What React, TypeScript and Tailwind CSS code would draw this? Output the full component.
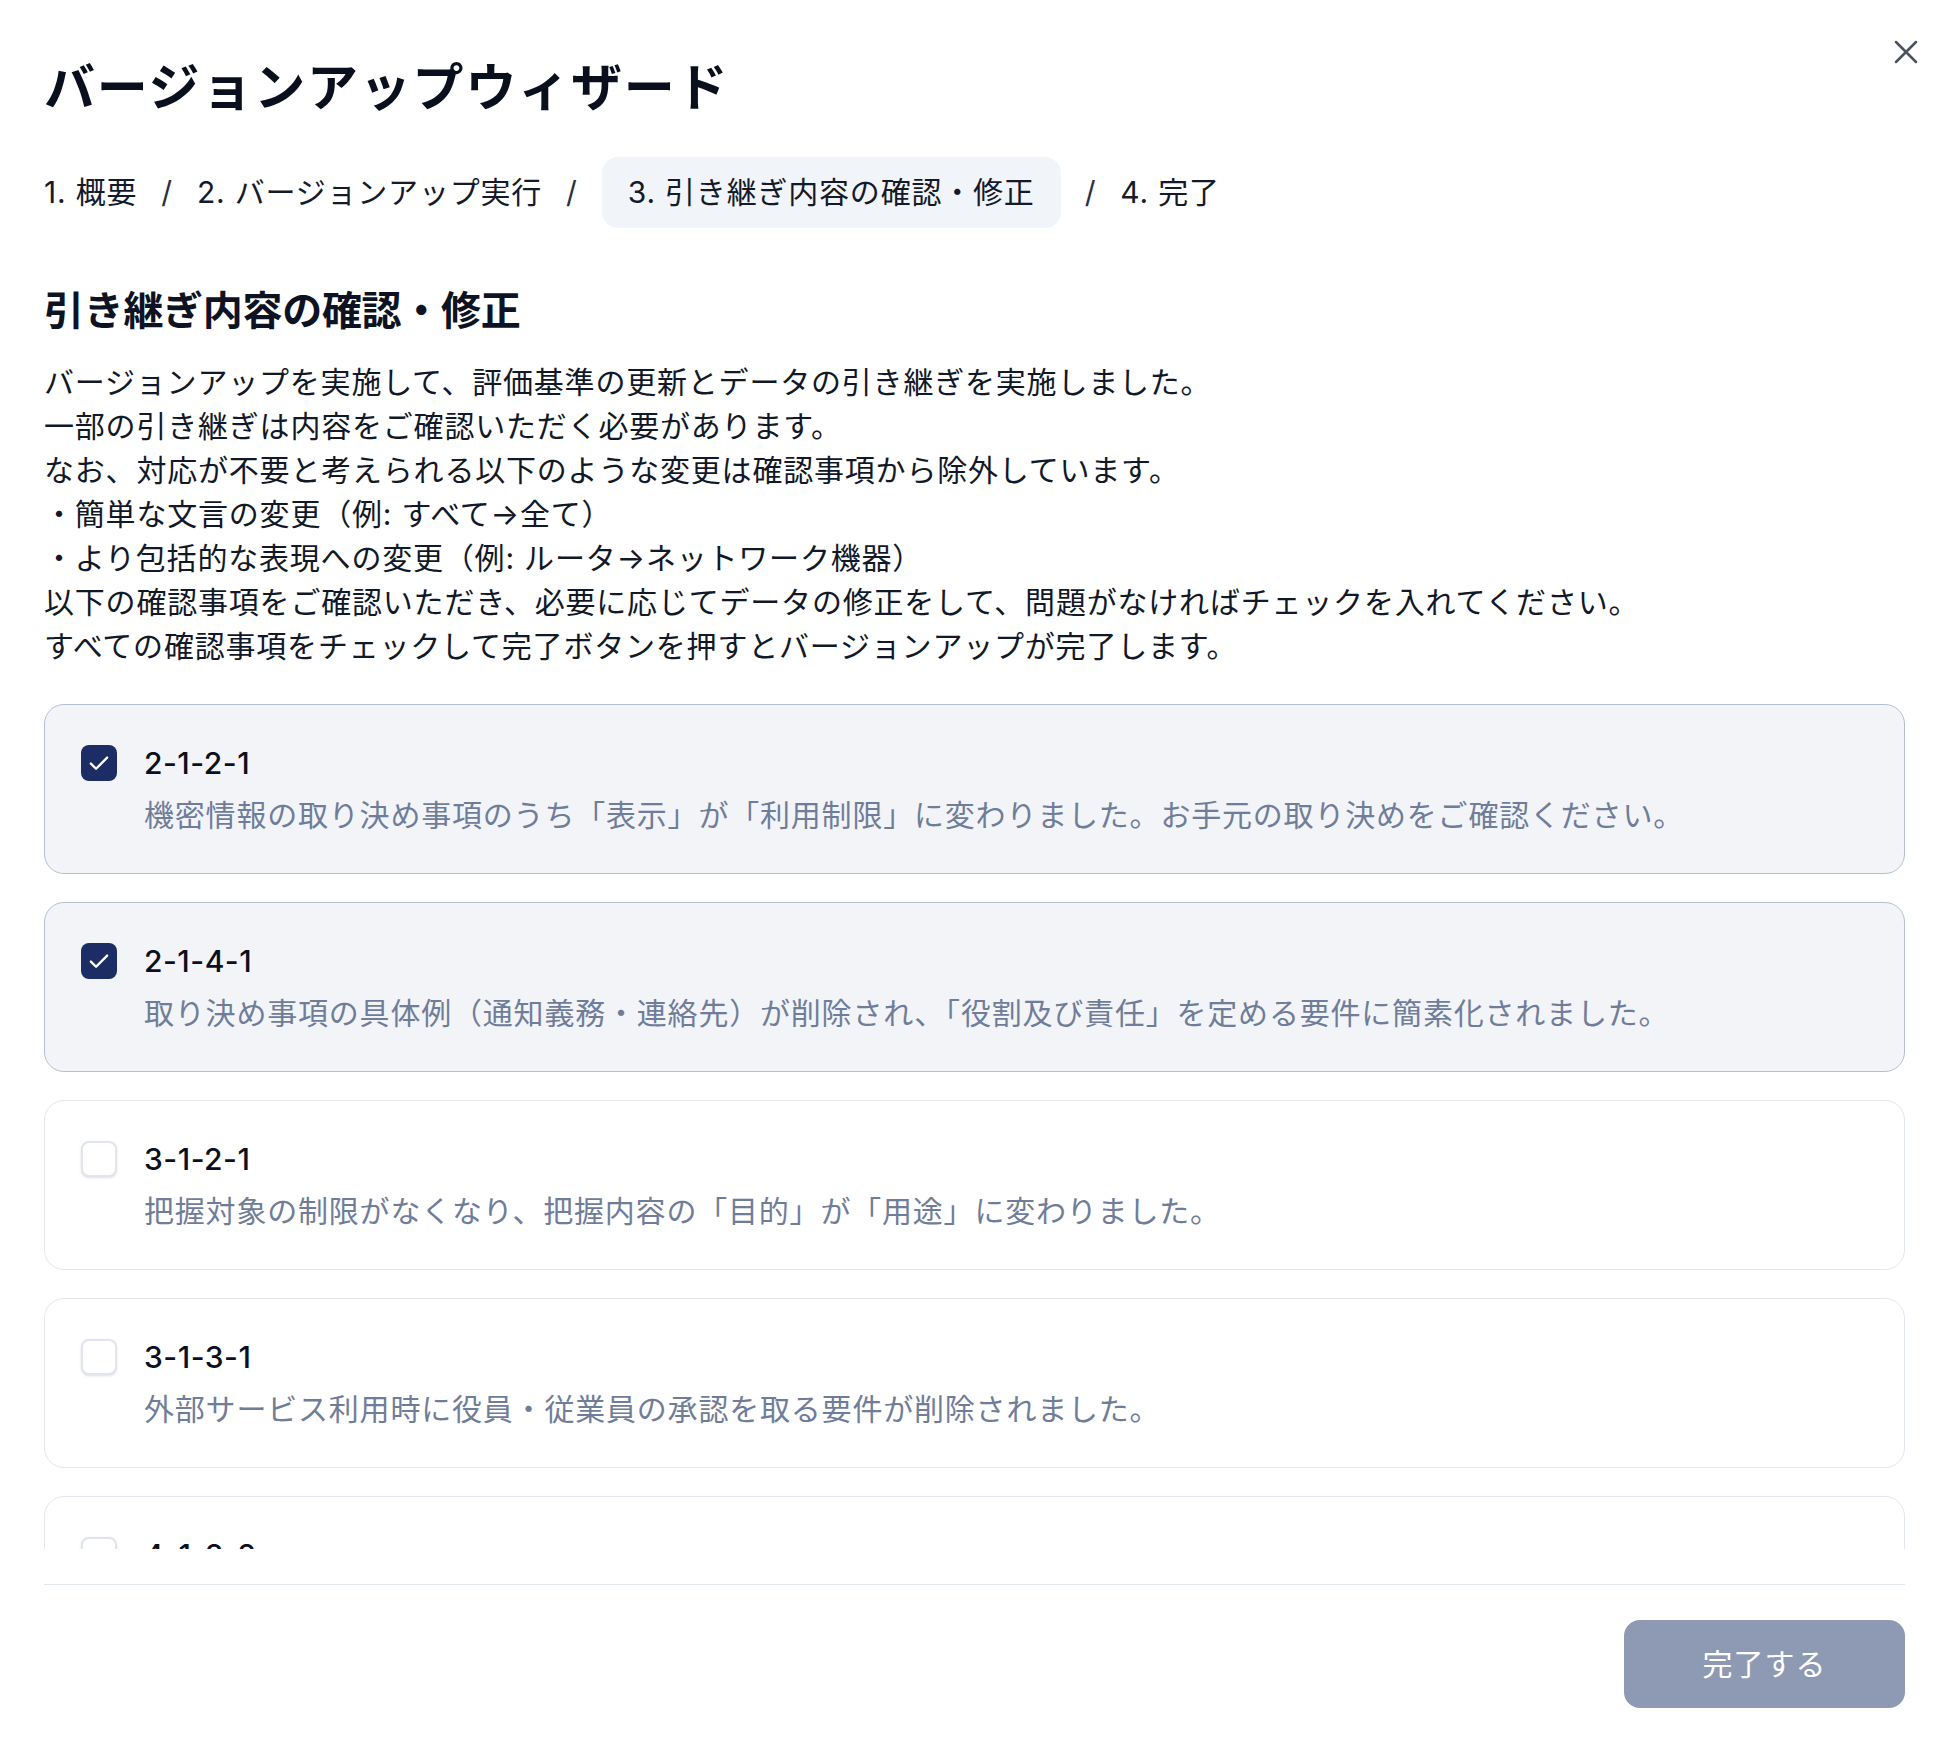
import React, { useState } from "react";
import { X } from "lucide-react";

type Item = { code: string; text: string; checked: boolean };

const initialItems: Item[] = [
  {
    code: "2-1-2-1",
    text: "機密情報の取り決め事項のうち「表示」が「利用制限」に変わりました。お手元の取り決めをご確認ください。",
    checked: true,
  },
  {
    code: "2-1-4-1",
    text: "取り決め事項の具体例（通知義務・連絡先）が削除され、「役割及び責任」を定める要件に簡素化されました。",
    checked: true,
  },
  {
    code: "3-1-2-1",
    text: "把握対象の制限がなくなり、把握内容の「目的」が「用途」に変わりました。",
    checked: false,
  },
  {
    code: "3-1-3-1",
    text: "外部サービス利用時に役員・従業員の承認を取る要件が削除されました。",
    checked: false,
  },
  {
    code: "4-1-2-2",
    text: "記録の保管期間に関する要件が変更されました。",
    checked: false,
  },
];

const steps = ["1. 概要", "2. バージョンアップ実行", "3. 引き継ぎ内容の確認・修正", "4. 完了"];

const intro = [
  "バージョンアップを実施して、評価基準の更新とデータの引き継ぎを実施しました。",
  "一部の引き継ぎは内容をご確認いただく必要があります。",
  "なお、対応が不要と考えられる以下のような変更は確認事項から除外しています。",
  "・簡単な文言の変更（例: すべて→全て）",
  "・より包括的な表現への変更（例: ルータ→ネットワーク機器）",
  "以下の確認事項をご確認いただき、必要に応じてデータの修正をして、問題がなければチェックを入れてください。",
  "すべての確認事項をチェックして完了ボタンを押すとバージョンアップが完了します。",
];

// Checkbox drawn by hand to match the navy square in the wizard
function CheckBox({ checked, onClick }: { checked: boolean; onClick: () => void }) {
  return (
    <button
      onClick={onClick}
      className={
        checked
          ? "mt-[4px] flex h-[36px] w-[36px] shrink-0 items-center justify-center rounded-[8px] bg-[#1b2d64]"
          : "mt-[4px] flex h-[36px] w-[36px] shrink-0 items-center justify-center rounded-[8px] border-2 border-[#e1e5ee] bg-white shadow-sm"
      }
    >
      {checked && (
        <svg width="26" height="26" viewBox="0 0 24 24" fill="none">
          <path d="M4.5 12.5l4.8 4.8L19.5 7" stroke="white" strokeWidth="2.2" strokeLinecap="round" strokeLinejoin="round" />
        </svg>
      )}
    </button>
  );
}

export default function App() {
  const [items, setItems] = useState<Item[]>(initialItems);

  const toggle = (i: number) => {
    setItems((prev) => prev.map((it, idx) => (idx === i ? { ...it, checked: !it.checked } : it)));
  };

  const allChecked = items.every((it) => it.checked);

  return (
    <div
      className="relative flex h-[1740px] w-full flex-col bg-white pl-[44px] pr-[41px] text-[#0d1322]"
      style={{ fontFamily: 'Inter, "Noto Sans CJK JP", sans-serif' }}
    >
      {/* close */}
      <button className="absolute right-[20px] top-[32px] text-[#4b5260]">
        <X size={40} strokeWidth={1.5} />
      </button>

      {/* header */}
      <h1 className="pt-[58px] text-[51px] font-bold leading-[60px] tracking-[1.8px] text-[#0a0f1e]">
        バージョンアップウィザード
      </h1>

      <nav className="mt-[39px] flex items-center gap-[24px] text-[30px] tracking-[0.8px] text-[#141a2a]">
        {steps.map((s, i) => (
          <React.Fragment key={s}>
            {i > 0 && <span className="text-[#2a3040]">/</span>}
            {i === 2 ? (
              <span className="flex h-[71px] items-center rounded-[16px] bg-[#f1f4f9] px-[26px]">{s}</span>
            ) : (
              <span className="flex h-[71px] items-center">{s}</span>
            )}
          </React.Fragment>
        ))}
      </nav>

      {/* scroll area */}
      <div className="min-h-0 flex-1 overflow-hidden">
        <h2 className="pt-[59px] text-[40px] font-bold leading-[48px] tracking-[-0.3px] text-[#0d1322]">
          引き継ぎ内容の確認・修正
        </h2>

        <div className="mt-[25px] text-[30px] leading-[44px] tracking-[0.8px] text-[#111827]">
          {intro.map((line) => (
            <p key={line}>{line}</p>
          ))}
        </div>

        <div className="mt-[36px] flex flex-col gap-[28px]">
          {items.map((it, i) => (
            <div
              key={it.code}
              className={
                it.checked
                  ? "flex gap-[27px] rounded-[20px] border border-[#b6bfd2] bg-[#f2f4f8] px-[36px] py-[36px]"
                  : "flex gap-[27px] rounded-[20px] border border-[#e2e6ef] bg-white px-[36px] py-[36px]"
              }
            >
              <CheckBox checked={it.checked} onClick={() => toggle(i)} />
              <div className="flex flex-col">
                <div className="text-[30px] font-medium leading-[44px] tracking-[0.5px] text-[#0b1020]">{it.code}</div>
                <div className="mt-[8px] text-[30px] leading-[44px] tracking-[0.8px] text-[#6f7d99]">{it.text}</div>
              </div>
            </div>
          ))}
        </div>
      </div>

      {/* footer */}
      <div className="mt-[35px] flex justify-end border-t border-[#e3e7f0] pb-[32px] pt-[35px]">
        <button
          className={
            allChecked
              ? "h-[88px] w-[281px] rounded-[16px] bg-[#1b2d64] text-[30px] tracking-[1px] text-white"
              : "h-[88px] w-[281px] rounded-[16px] bg-[#8e99b3] text-[30px] tracking-[1px] text-white"
          }
        >
          完了する
        </button>
      </div>
    </div>
  );
}
